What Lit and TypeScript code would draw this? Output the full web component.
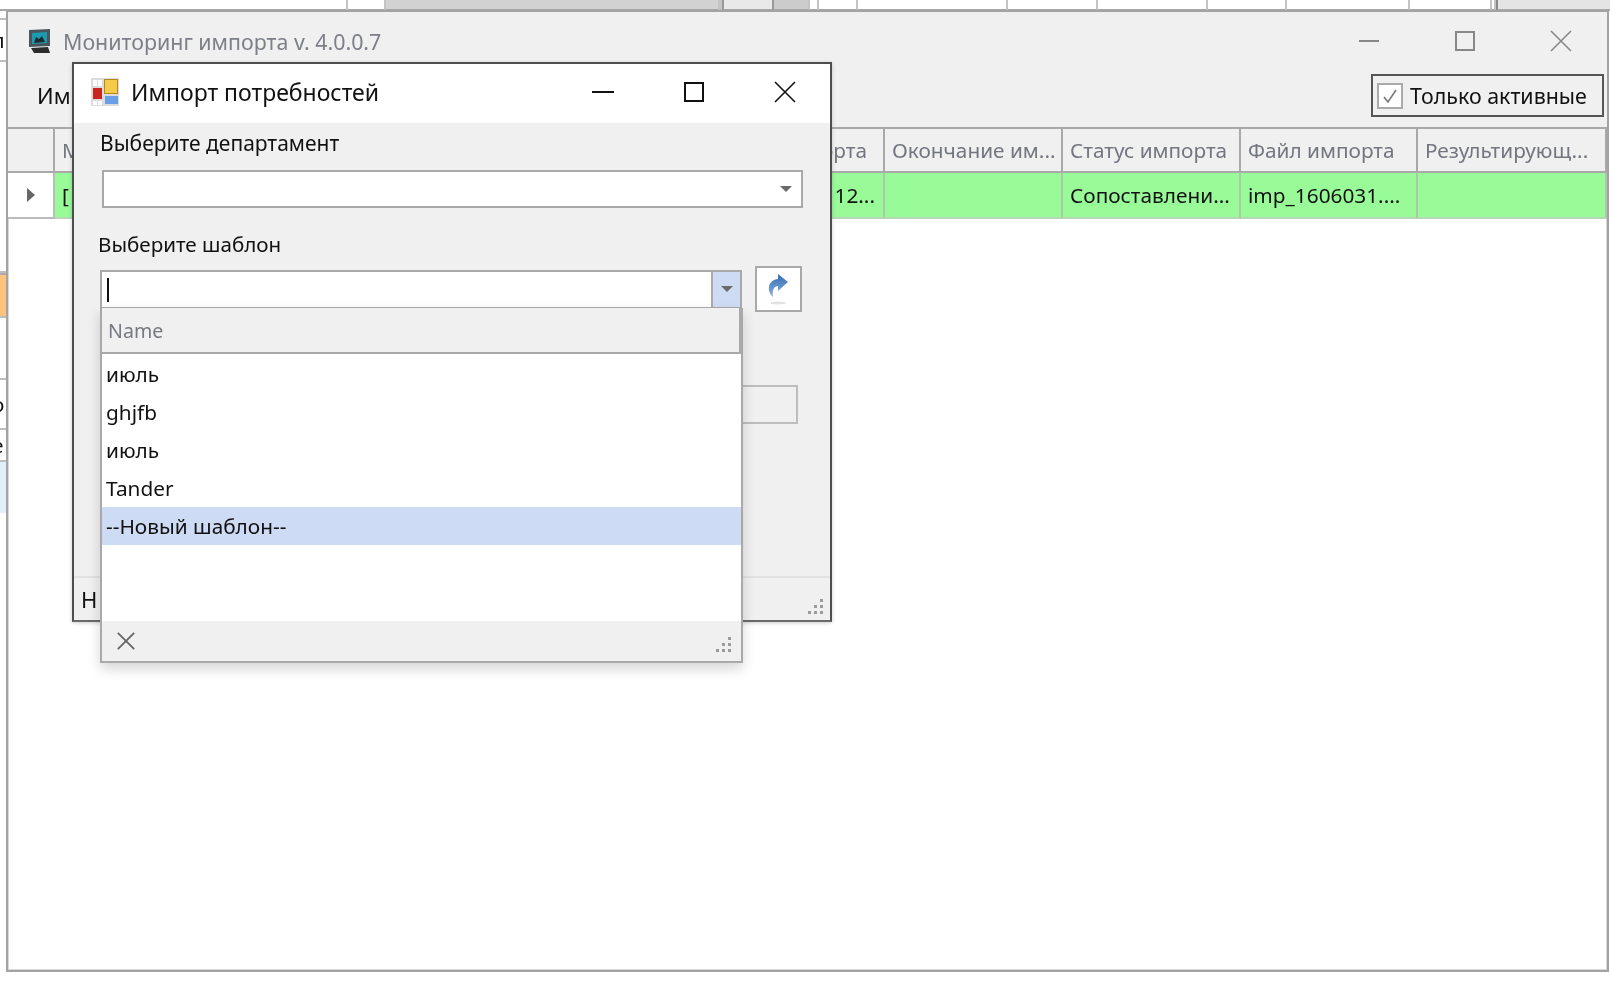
import { LitElement, html, css, svg } from "lit";
import { customElement } from "lit/decorators.js";

const closeIcon = (c: string, s = 22, w = 1.6) => html`<svg width=${s} height=${s} viewBox="0 0 22 22"><path d="M1 1L21 21M21 1L1 21" fill="none" stroke=${c} stroke-width=${w}/></svg>`;
const grip = html`<svg class="grip" width="20" height="20" viewBox="0 0 20 20" fill="#9a9a9a">${[[15,2],[15,8],[9,8],[15,14],[9,14],[3,14]].map(([x,y])=>svg`<rect x=${x} y=${y} width="3" height="3"/>`)}</svg>`;

const topCells: [number, string][] = [
  [348, "w"], [38, "w"], [334, "g"], [2, "w"], [52, "l"], [36, "m"], [9, "w"], [39, "w"],
  [150, "w"], [90, "w"], [110, "w"], [79, "w"], [123, "w"], [82, "w"], [4, "w"], [114, "e"],
];
const leftRows: [number, string, string][] = [
  [20, "w", ""], [42, "w", "п"], [211, "w", ""], [45, "o", ""], [62, "w", ""], [50, "w", "о"],
  [32, "w", "е"], [51, "b", ""],
];

@customElement("app-root")
export class AppRoot extends LitElement {
  static styles = css`
    :host { display:block; position:relative; width:1610px; height:984px; overflow:hidden; background:#fff; font-family:"Noto Sans","Open Sans",sans-serif; font-size:20.8px; color:#111; filter:blur(.4px); }
    .bgtop { position:absolute; left:0; right:0; top:0; height:11px; display:flex; }
    .tc { box-sizing:border-box; height:11px; border-right:2px solid #c4c4c4; border-bottom:2px solid #a8a8a8; flex:none; }
    .tc.g { background:#d2d2d2; } .tc.l { background:#e9e9e9; border-left:2px solid #999; border-right-color:#999; } .tc.m { background:#ccc; } .tc.e { background:#e4e4e4; flex:1; border-left:2px solid #888; border-right:0; }
    .bgleft { position:absolute; left:0; top:0; width:6px; display:flex; flex-direction:column; }
    .lr { box-sizing:border-box; border-bottom:2px solid #bdbdbd; overflow:hidden; display:flex; align-items:center; }
    .lr span { margin-left:-8px; }
    .lr.o { background:#fdc37f; border-top:2px solid #aaa; } .lr.b { background:#e2eefa; border:0; }
    .win { position:absolute; box-sizing:border-box; }
    .main { left:6px; top:10px; width:1603px; height:962px; background:#fff; border:2px solid #a3a3a3; display:flex; flex-direction:column; box-shadow:inset 0 0 0 1px #d8d8d8; }
    .mtitle { box-sizing:border-box; height:50px; flex:none; background:#f0f0f0; display:flex; align-items:center; padding:8px 0 0 18px; color:#7d7f88; }
    .mtitle .t { margin-left:11px; flex:1; font-size:21.4px; }
    .wbtns { display:flex; align-items:center; }
    .mtitle .wbtns { margin-right:-2px; }
    .wbtn { width:96px; display:flex; justify-content:center; align-items:center; height:24px; }
    .mtool { height:65px; flex:none; background:#f0f0f0; display:flex; align-items:center; justify-content:space-between; padding:0 3px 0 29px; font-size:22px; }
    .activ { box-sizing:border-box; width:233px; height:43px; border:2px solid #555; display:flex; align-items:center; padding-left:4px; gap:7px; margin-top:2px; font-size:21.4px; }
    .cb { box-sizing:border-box; width:26px; height:26px; border:2px solid #aaa; background:#fff; display:flex; align-items:center; justify-content:center; }
    .grid { display:grid; grid-template-columns:47px 652px 178px 178px 178px 177px 1fr; }
    .hc { box-sizing:border-box; height:46px; background:#f0f0f0; border:solid #a9a9a9; border-width:2px 2px 2px 0; display:flex; align-items:center; padding:0 7px; color:#737680; white-space:nowrap; overflow:hidden; }
    .hc.end { justify-content:flex-end; padding-right:16px; }
    .rc { box-sizing:border-box; height:46px; background:#98fb98; border-right:2px solid #a9c9a9; border-bottom:2px solid #b7d8b7; display:flex; align-items:center; padding:0 7px; white-space:nowrap; overflow:hidden; }
    .rc.end { justify-content:flex-end; padding-right:8px; }
    .rc.first { background:#fff; border-color:#bbb; justify-content:center; }
    .dlg { left:72px; top:62px; width:760px; height:560px; background:#f0f0f0; border:2px solid #4e4e4e; border-bottom-color:#6a6a6a; display:flex; flex-direction:column; box-shadow:0 1px 4px rgba(0,0,0,.2); }
    .dtitle { box-sizing:border-box; height:59px; flex:none; background:#fff; display:flex; align-items:center; padding:0 0 3px 17px; gap:12px; color:#111; font-size:23px; }
    .dtitle .t { flex:1; }
    .dtitle .wbtn { width:91px; }
    .dtitle .wbtns { margin-top:-1px; }
    .dbody { flex:1; padding:6px 26px 0 26px; display:flex; flex-direction:column; }
    .dbody label { line-height:28px; }
    .l1 { font-size:21px; }
    .l2 { margin:22px 0 0 -2px; font-size:20.6px; }
    .combo { box-sizing:border-box; height:38px; width:701px; margin:13px 0 0 2px; border:2px solid #a9a9a9; background:#fff; display:flex; justify-content:flex-end; align-items:center; padding-right:9px; }
    .arrow { width:0; height:0; border:6px solid transparent; border-top:6px solid #6a6a6a; border-bottom:0; }
    .row2 { display:flex; align-items:center; gap:13px; margin-top:8px; }
    .combo2 { box-sizing:border-box; width:642px; height:39px; border:2px solid #a9a9a9; background:#fff; display:flex; align-items:stretch; }
    .caret { width:2px; height:24px; background:#111; margin:6px 0 0 5px; }
    .dd { margin-left:auto; width:27px; background:#cddcf4; border-left:2px solid #a9a9a9; display:flex; align-items:center; justify-content:center; }
    .go { box-sizing:border-box; width:47px; height:46px; border:2px solid #a9a9a9; background:#fff; display:flex; align-items:center; justify-content:center; padding-right:4px; }
    .ghost { box-sizing:border-box; width:698px; height:39px; margin-top:73px; border:2px solid #bdbdbd; }
    .dstatus { height:42px; flex:none; border-top:2px solid #e2e2e2; display:flex; align-items:center; justify-content:space-between; padding:0 5px 0 7px; font-size:22px; }
    .dstatus .grip { align-self:flex-end; margin-bottom:3px; }
    .pop { left:100px; top:308px; width:643px; height:355px; background:#fff; border:2px solid #a9a9a9; border-top:0; display:flex; flex-direction:column; box-shadow:0 6px 12px rgba(0,0,0,.16); }
    .phead { box-sizing:border-box; height:46px; flex:none; background:#f0f0f0; border:2px solid #a9a9a9; border-top:0; border-left:0; padding-left:6px; display:flex; align-items:center; color:#767980; font-size:19.6px; }
    .items { flex:1; padding-top:1px; }
    .it { height:38px; display:flex; align-items:center; padding-left:4px; }
    .it.sel { background:#cddcf4; }
    .pfoot { height:40px; flex:none; background:#f0f0f0; display:flex; align-items:center; justify-content:space-between; padding:0 8px 0 15px; }
    .pfoot .grip { align-self:flex-end; margin-bottom:6px; }
  `;

  render() {
    const heads = ["", "М", "Начало импорта", "Окончание им...", "Статус импорта", "Файл импорта", "Результирующ..."];
    const cells = ["", "[", "03.06.2016 12...", "", "Сопоставлени...", "imp_1606031....", ""];
    return html`
      <div class="bgtop">${topCells.map(([w, k]) => html`<div class="tc ${k}" style="width:${w}px"></div>`)}</div>
      <div class="bgleft">${leftRows.map(([h, k, t]) => html`<div class="lr ${k}" style="height:${h}px">${t ? html`<span>${t}</span>` : ""}</div>`)}</div>

      <div class="win main">
        <div class="mtitle">
          <svg width="26" height="26" viewBox="0 0 26 26"><path d="M3 2L24 1V18L3 19Z" fill="#4a545c"/><path d="M6 5L21 4V15L6 16Z" fill="#1c9ab0"/><path d="M8 15L10 9L13 11L16 8L19 14Z" fill="#1d2a30"/><path d="M5 20L22 19L24 25L8 25Z" fill="#2d2d2d"/></svg>
          <span class="t">Мониторинг импорта v. 4.0.0.7</span>
          <div class="wbtns">
            <div class="wbtn"><svg width="20" height="4"><rect y="1" width="20" height="2" fill="#888"/></svg></div>
            <div class="wbtn"><svg width="20" height="20"><rect x="1" y="1" width="18" height="18" fill="none" stroke="#888" stroke-width="2"/></svg></div>
            <div class="wbtn">${closeIcon("#888")}</div>
          </div>
        </div>
        <div class="mtool"><span>Импорт</span>
          <div class="activ"><div class="cb"><svg width="18" height="18" viewBox="0 0 18 18"><path d="M3 10L7 15L15 3" fill="none" stroke="#777" stroke-width="1.6"/></svg></div><span>Только активные</span></div>
        </div>
        <div class="grid">
          ${heads.map((h, i) => html`<div class="hc ${i === 2 ? "end" : ""}">${h}</div>`)}
          ${cells.map((c, i) => html`<div class="rc ${i === 0 ? "first" : i === 2 ? "end" : ""}">${i === 0 ? html`<svg width="10" height="16"><path d="M1 1L9 8L1 15Z" fill="#666"/></svg>` : c}</div>`)}
        </div>
      </div>

      <div class="win dlg">
        <div class="dtitle">
          <svg width="28" height="28" viewBox="0 0 28 28"><rect width="28" height="28" fill="#dcdcdc"/><rect x="13.5" y="1.5" width="13" height="14" fill="#f6cb4a" stroke="#b08a1c"/><rect x="2" y="10" width="9" height="11" fill="#c8261c"/><rect x="14" y="18" width="13" height="8" fill="#6a9fe8"/><rect x="2" y="2" width="4" height="6" fill="#fff"/><rect x="7" y="2" width="4" height="6" fill="#fff"/><rect x="2" y="23" width="4" height="4" fill="#fff"/><rect x="7" y="23" width="4" height="4" fill="#fff"/></svg>
          <span class="t">Импорт потребностей</span>
          <div class="wbtns">
            <div class="wbtn"><svg width="22" height="4"><rect y="1" width="22" height="2" fill="#111"/></svg></div>
            <div class="wbtn"><svg width="20" height="20"><rect x="1" y="1" width="18" height="18" fill="none" stroke="#111" stroke-width="2"/></svg></div>
            <div class="wbtn">${closeIcon("#111")}</div>
          </div>
        </div>
        <div class="dbody">
          <label class="l1">Выберите департамент</label>
          <div class="combo"><span class="arrow"></span></div>
          <label class="l2">Выберите шаблон</label>
          <div class="row2">
            <div class="combo2"><span class="caret"></span><div class="dd"><span class="arrow"></span></div></div>
            <div class="go"><svg width="24" height="36" viewBox="0 0 24 36"><defs><linearGradient id="goGrad" x1="0" y1="0" x2="0" y2="1"><stop offset="0" stop-color="#2f6cb4"/><stop offset="1" stop-color="#8fb2dc"/></linearGradient></defs><ellipse cx="13" cy="32" rx="8" ry="1.5" fill="#e2e2e2"/><path d="M13 3L23 11L13 20V15C9 15 7 19 8 26C1 20 3 9 13 8Z" fill="url(#goGrad)"/></svg></div>
          </div>
          <div class="ghost"></div>
        </div>
        <div class="dstatus"><span>Н</span>${grip}</div>
      </div>

      <div class="win pop">
        <div class="phead">Name</div>
        <div class="items">
          <div class="it">июль</div><div class="it">ghjfb</div><div class="it">июль</div><div class="it">Tander</div><div class="it sel">--Новый шаблон--</div>
        </div>
        <div class="pfoot">${closeIcon("#666", 18, 2.2)}${grip}</div>
      </div>
    `;
  }
}
